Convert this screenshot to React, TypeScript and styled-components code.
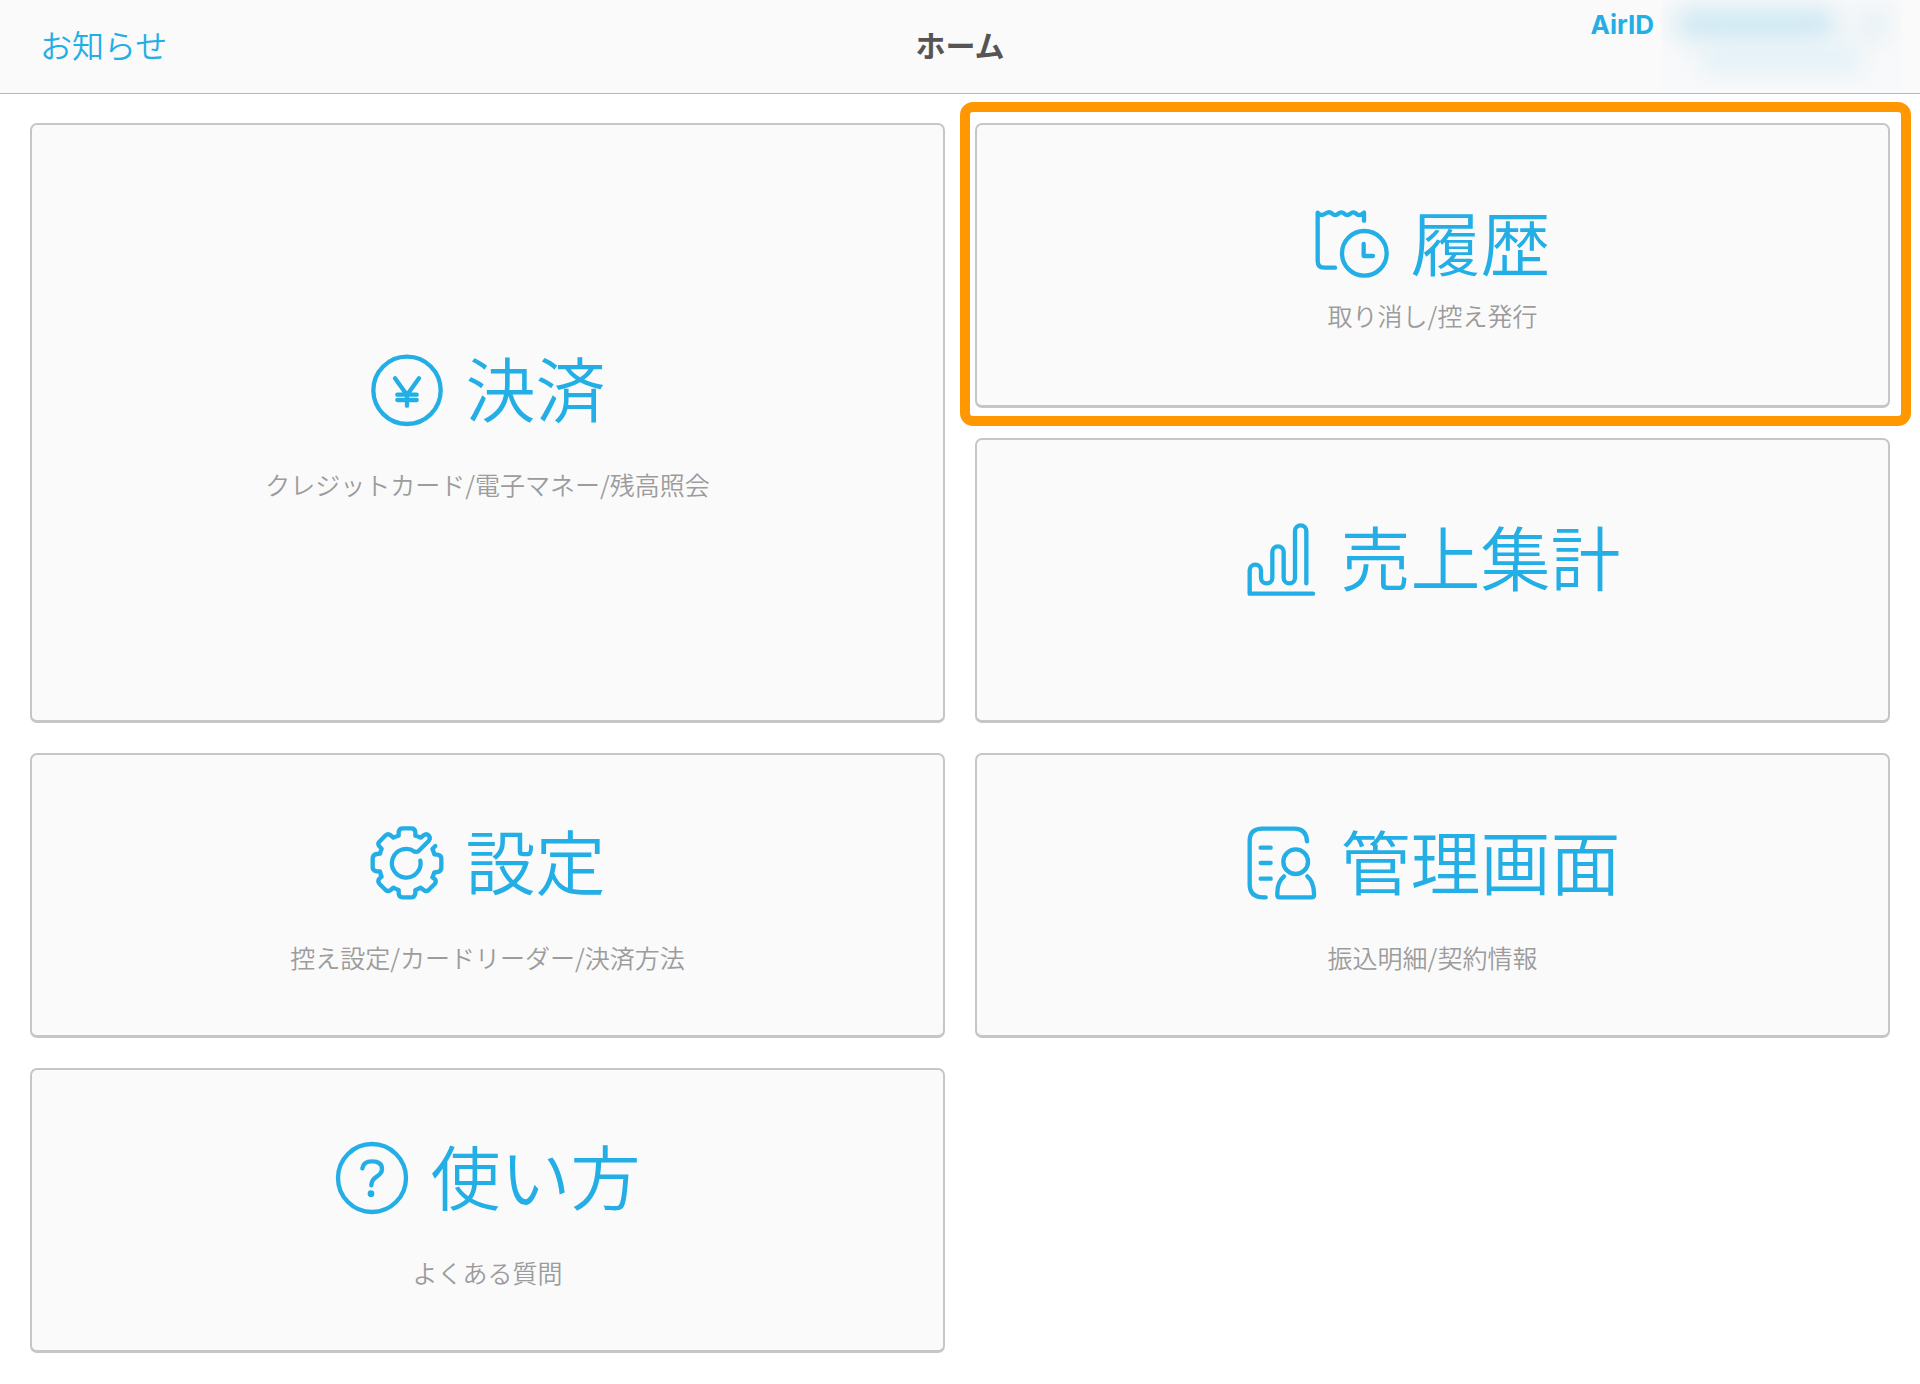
import React from "react";
import styled, { createGlobalStyle, css } from "styled-components";

const blue = "#23afe6";
const line = "#c6c6c6";
const surface = "#fafafa";

const GlobalStyle = createGlobalStyle`
  *, *::before, *::after {
    box-sizing: border-box;
  }
  body {
    margin: 0;
    background: #fff;
    font-family: "Noto Sans CJK JP", sans-serif;
  }
`;

const Header = styled.header`
  display: grid;
  grid-template-columns: 1fr auto 1fr;
  align-items: center;
  height: 94px;
  padding: 0 18px;
  background: ${surface};
  border-bottom: 1px solid #b8b8b8;
`;

const NewsLink = styled.a`
  justify-self: start;
  padding: 0 22px 6px;
  color: ${blue};
  font-size: 32px;
  font-weight: 350;
  line-height: 40px;
  text-decoration: none;
`;

const PageTitle = styled.h1`
  margin: 0;
  padding-bottom: 6px;
  color: #555;
  font-size: 30px;
  font-weight: 700;
  line-height: 40px;
`;

const Account = styled.div`
  display: flex;
  justify-self: end;
  align-self: start;
  gap: 8px;
  color: ${blue};
  font-family: Inter, sans-serif;
  font-size: 26px;
  font-weight: 700;
  line-height: 50px;
`;

const Masked = styled.div`
  display: grid;
  grid-template-columns: 160px 26px;
  grid-template-rows: 28px 22px;
  gap: 10px 24px;
  width: 240px;
  height: 89px;
  padding: 10px 14px;
  overflow: hidden;
  background: #f8f9fa;
`;

const Smudge = styled.span<{ $tone: string; $wide?: boolean }>`
  grid-column: ${(p) => (p.$wide ? "1 / -1" : "auto")};
  margin: 0 ${(p) => (p.$wide ? 24 : 0)}px;
  border-radius: 10px;
  background: ${(p) => p.$tone};
  filter: blur(12px);
`;

const Menu = styled.main`
  display: grid;
  grid-template-columns: 1fr 1fr;
  grid-auto-rows: minmax(285px, auto);
  gap: 30px;
  padding: 29px 30px 31px;
`;

const Card = styled.button<{ $tall?: boolean; $compact?: boolean; $marked?: boolean }>`
  position: relative;
  display: flex;
  flex-direction: column;
  align-items: center;
  justify-content: center;
  gap: ${(p) => (p.$compact ? 16 : 39)}px;
  grid-row: span ${(p) => (p.$tall ? 2 : 1)};
  padding: 4px 0 0;
  border: 2px solid ${line};
  border-bottom-width: 3px;
  border-radius: 7px;
  background: ${surface};
  font-family: inherit;
  cursor: pointer;

  ${(p) =>
    p.$marked &&
    css`
      &::after {
        content: "";
        position: absolute;
        inset: -23px -23px -21px -17px;
        border: 10px solid #ff9800;
        border-radius: 13px;
        pointer-events: none;
      }
    `}
`;

const CardTitle = styled.span`
  display: flex;
  align-items: center;
  gap: 22px;
  color: ${blue};
  font-size: 70px;
  font-weight: 350;
  line-height: 74px;
`;

const CardLabel = styled.span`
  padding-bottom: 6px;
`;

const CardNote = styled.span`
  min-height: 30px;
  color: #9c9c9c;
  font-size: 25px;
  font-weight: 350;
  line-height: 30px;
`;

const Icon = styled.svg`
  width: 74px;
  height: 74px;
  fill: none;
  stroke: currentColor;
  stroke-width: 13;
  stroke-linecap: round;
  stroke-linejoin: round;
`;

const YenIcon = () => (
  <Icon viewBox="60 40 222 222" aria-hidden="true">
    <circle cx="171" cy="152" r="101" />
    <path d="M135 116L171 166L207 116M171 166V198M142 165H200M142 181H200" />
  </Icon>
);

const ReceiptIcon = () => (
  <Icon viewBox="75 52 222 222" aria-hidden="true">
    <path d="M135 234H103Q83 234 83 214V69Q92 79 100 75L112 69Q118 66 124 70L131 75Q136 78 142 74L148 70Q154 66 160 70L167 75Q172 78 178 74L184 70Q190 66 196 70L202 75Q209 79 222 69V93" />
    <circle cx="223" cy="191" r="67" />
    <path d="M221 163V199H249" />
  </Icon>
);

const ChartIcon = () => (
  <Icon viewBox="76 65 222 222" aria-hidden="true">
    <path d="M280 280H90V210a17 17 0 0 1 34 0v22a17 17 0 0 0 34 0V155a17 17 0 0 1 34 0v77a17 17 0 0 0 34 0V92a17 17 0 0 1 34 0V249" />
  </Icon>
);

const GearIcon = () => (
  <Icon viewBox="60 48 222 222" aria-hidden="true">
    <path d="M256 108L247 117Q251 125 253 133L262 134Q274 136 274 146V174Q274 184 262 186L253 187Q251 195 247 202L255 208Q260 215 254 222L236 240Q229 246 221 240L212 233Q204 238 196 240V250Q194 262 184 262H158Q147 262 146 250V240Q137 237 130 233L122 240Q114 246 107 240L88 221Q82 213 88 206L95 200Q91 192 90 184L80 184Q68 182 68 172V146Q68 134 80 132L90 131Q92 122 95 116L88 109Q82 102 88 95L107 76Q114 70 122 76L130 83Q138 79 146 77V66Q148 55 158 55H184Q195 55 196 66V77Q205 79 212 83L221 76Q229 70 236 76Q243 84 236 93L208 121Q203 127 194 125A43 43 0 1 0 211 152" />
  </Icon>
);

const AdminIcon = () => (
  <Icon viewBox="45 48 222 222" aria-hidden="true">
    <path d="M107 262H100Q59 262 59 222V92Q59 56 98 56H193Q229 56 231 94" />
    <path d="M92 113H122M92 159H122M92 206H122" />
    <circle cx="197" cy="155" r="37" />
    <path d="M162 199Q142 216 142 248V256Q142 262 150 262H244Q252 262 252 256V248Q250 214 232 199" />
  </Icon>
);

const HelpIcon = () => (
  <Icon viewBox="43 63 222 222" aria-hidden="true">
    <circle cx="154" cy="174" r="102" />
    <path d="M125 145Q128 124 154 124Q184 124 184 147Q184 160 168 170Q152 180 152 196" />
    <circle cx="151" cy="221" r="10" fill="currentColor" stroke="none" />
  </Icon>
);

type Item = {
  title: string;
  note?: string;
  icon: React.ComponentType;
  tall?: boolean;
  compact?: boolean;
  marked?: boolean;
};

const items: Item[] = [
  { title: "決済", note: "クレジットカード/電子マネー/残高照会", icon: YenIcon, tall: true },
  { title: "履歴", note: "取り消し/控え発行", icon: ReceiptIcon, compact: true, marked: true },
  { title: "売上集計", icon: ChartIcon, compact: true },
  { title: "設定", note: "控え設定/カードリーダー/決済方法", icon: GearIcon },
  { title: "管理画面", note: "振込明細/契約情報", icon: AdminIcon },
  { title: "使い方", note: "よくある質問", icon: HelpIcon },
];

export default function App() {
  return (
    <div lang="ja">
      <GlobalStyle />
      <Header>
        <NewsLink href="#news">お知らせ</NewsLink>
        <PageTitle>ホーム</PageTitle>
        <Account>
          <span>AirID</span>
          <Masked>
            <Smudge $tone="#cae7f2" />
            <Smudge $tone="#dfeef4" />
            <Smudge $tone="#deeff7" $wide />
          </Masked>
        </Account>
      </Header>
      <Menu>
        {items.map(({ title, note, icon: Glyph, tall, compact, marked }) => (
          <Card key={title} type="button" $tall={tall} $compact={compact} $marked={marked}>
            <CardTitle>
              <Glyph />
              <CardLabel>{title}</CardLabel>
            </CardTitle>
            <CardNote>{note}</CardNote>
          </Card>
        ))}
      </Menu>
    </div>
  );
}
